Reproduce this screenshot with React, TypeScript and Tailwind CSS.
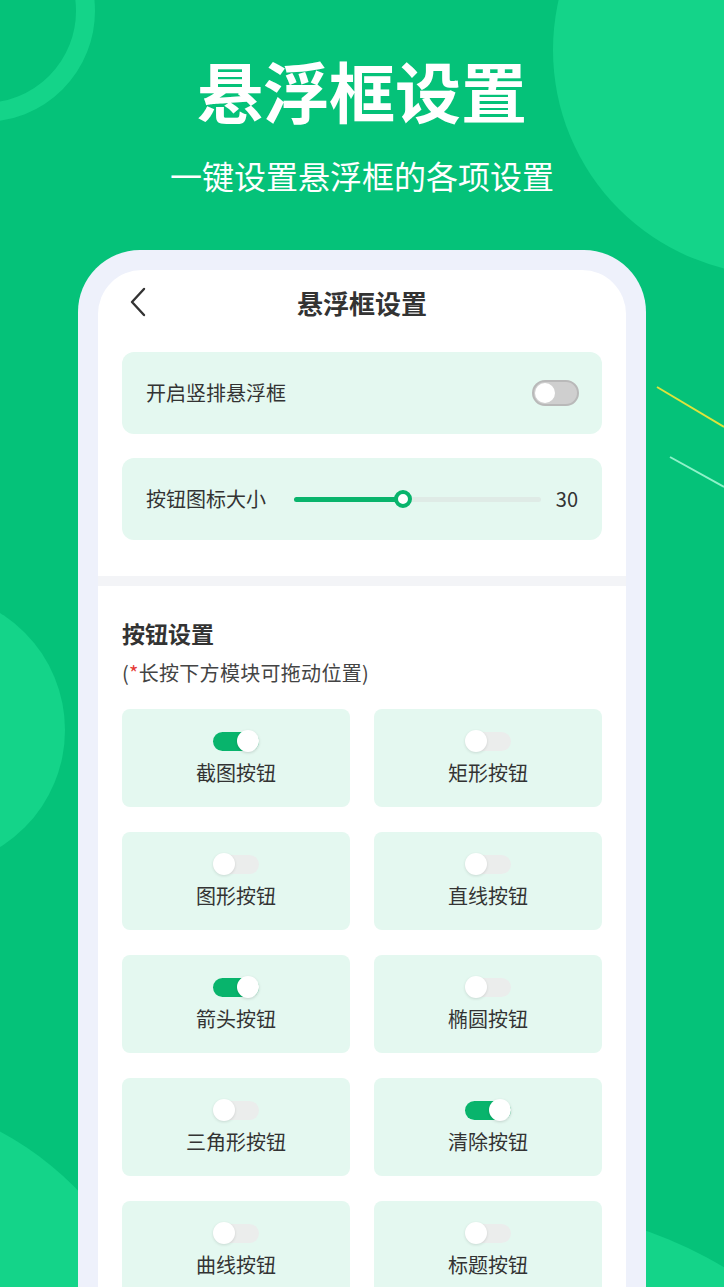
import React from 'react';

const font = { fontFamily: '"Noto Sans CJK SC", "Noto Sans", sans-serif' };

type Item = { label: string; on: boolean };

const items: Item[] = [
  { label: '截图按钮', on: true },
  { label: '矩形按钮', on: false },
  { label: '图形按钮', on: false },
  { label: '直线按钮', on: false },
  { label: '箭头按钮', on: true },
  { label: '椭圆按钮', on: false },
  { label: '三角形按钮', on: false },
  { label: '清除按钮', on: true },
  { label: '曲线按钮', on: false },
  { label: '标题按钮', on: false },
];

function MiniSwitch({ on }: { on: boolean }) {
  return (
    <div className="relative w-[46px] h-[22px] flex items-center">
      <div className={on ? 'w-full h-[19px] rounded-full bg-[#08b46c]' : 'w-full h-[19px] rounded-full bg-[#ebedec]'} />
      <div
        className={
          on
            ? 'absolute right-0 top-0 w-[22px] h-[22px] rounded-full bg-white shadow-[0_1px_3px_rgba(0,0,0,0.15)]'
            : 'absolute left-0 top-0 w-[22px] h-[22px] rounded-full bg-white shadow-[0_1px_3px_rgba(0,0,0,0.12)]'
        }
      />
    </div>
  );
}

export default function App() {
  return (
    <div className="relative w-[724px] h-[1287px] overflow-hidden bg-[#05c279] flex flex-col items-center" style={font}>
      {/* background decoration */}
      <div className="absolute left-[-127px] top-[-100px] w-[222px] h-[222px] rounded-full border-[19px] border-[#14d489]" />
      <div className="absolute left-[553px] top-[-175px] w-[450px] h-[450px] rounded-full bg-[#14d489]" />
      <div className="absolute left-[-211px] top-[592px] w-[276px] h-[276px] rounded-full bg-[#14d489]" />
      <div className="absolute left-[-468px] top-[1094px] w-[636px] h-[636px] rounded-full bg-[#14d489]" />
      <div className="absolute left-[82px] top-[1207px] w-[848px] h-[848px] rounded-full bg-[#14d489]" />
      <svg className="absolute left-0 top-0" width="724" height="1287">
        <line x1="657" y1="387" x2="724" y2="427" stroke="#dfe33c" strokeWidth="2" />
        <line x1="670" y1="457" x2="724" y2="487" stroke="#8ff2c9" strokeWidth="2" />
      </svg>

      {/* hero */}
      <h1 className="relative mt-[49px] text-[66px] leading-[80px] font-bold text-white">悬浮框设置</h1>
      <p className="relative mt-[26px] text-[32px] leading-[40px] text-white">一键设置悬浮框的各项设置</p>

      {/* phone */}
      <div className="relative mt-[55px] w-[568px] flex-1 rounded-t-[62px] bg-[#eef1fb] px-[20px] pt-[20px]">
        <div className="h-full rounded-t-[44px] bg-white flex flex-col overflow-hidden">
          <div className="relative h-[64px] flex items-center justify-center shrink-0">
            <svg className="absolute left-[30px] top-[17px]" width="20" height="30" viewBox="0 0 20 30">
              <path d="M16 2 L4 15 L16 28" fill="none" stroke="#333" strokeWidth="2.4" strokeLinecap="round" strokeLinejoin="round" />
            </svg>
            <span className="text-[26px] font-bold text-[#333]">悬浮框设置</span>
          </div>

          <div className="px-[24px] pt-[18px] flex flex-col gap-[24px]">
            <div className="h-[82px] rounded-[12px] bg-[#e4f8f0] flex items-center justify-between pl-[24px] pr-[23px]">
              <span className="text-[20px] text-[#333]">开启竖排悬浮框</span>
              <div className="relative w-[47px] h-[26px] rounded-full bg-[#cfcfcf] border-[2px] border-[#b9b9b9]">
                <div className="absolute left-[1px] top-[1px] w-[20px] h-[20px] rounded-full bg-white" />
              </div>
            </div>
            <div className="h-[82px] rounded-[12px] bg-[#e4f8f0] flex items-center pl-[24px] pr-[24px]">
              <span className="text-[20px] text-[#333]">按钮图标大小</span>
              <div className="relative ml-[28px] w-[247px] h-[18px] flex items-center">
                <div className="w-full h-[5px] rounded-full bg-[#dfebe6]" />
                <div className="absolute left-0 top-[6.5px] w-[109px] h-[5px] rounded-full bg-[#08b46c]" />
                <div className="absolute left-[100px] top-0 w-[18px] h-[18px] rounded-full bg-white border-[4px] border-[#08b46c]" />
              </div>
              <span className="ml-auto text-[20px] text-[#333]">30</span>
            </div>
          </div>

          <div className="mt-[36px] h-[10px] bg-[#f3f4f7] shrink-0" />

          <div className="px-[24px] pt-[32px]">
            <div className="text-[23px] leading-[30px] font-semibold text-[#333]">按钮设置</div>
            <div className="mt-[11px] text-[20px] leading-[28px] text-[#444] tracking-[0.3px]">
              (<span className="text-[#e53935]">*</span>长按下方模块可拖动位置)
            </div>
            <div className="mt-[22px] grid grid-cols-2 gap-x-[24px] gap-y-[25px]">
              {items.map((it) => (
                <div key={it.label} className="h-[98px] rounded-[8px] bg-[#e4f8f0] flex flex-col items-center pt-[21px]">
                  <MiniSwitch on={it.on} />
                  <span className="mt-[8px] text-[20px] leading-[26px] text-[#333]">{it.label}</span>
                </div>
              ))}
            </div>
          </div>
        </div>
      </div>
    </div>
  );
}
